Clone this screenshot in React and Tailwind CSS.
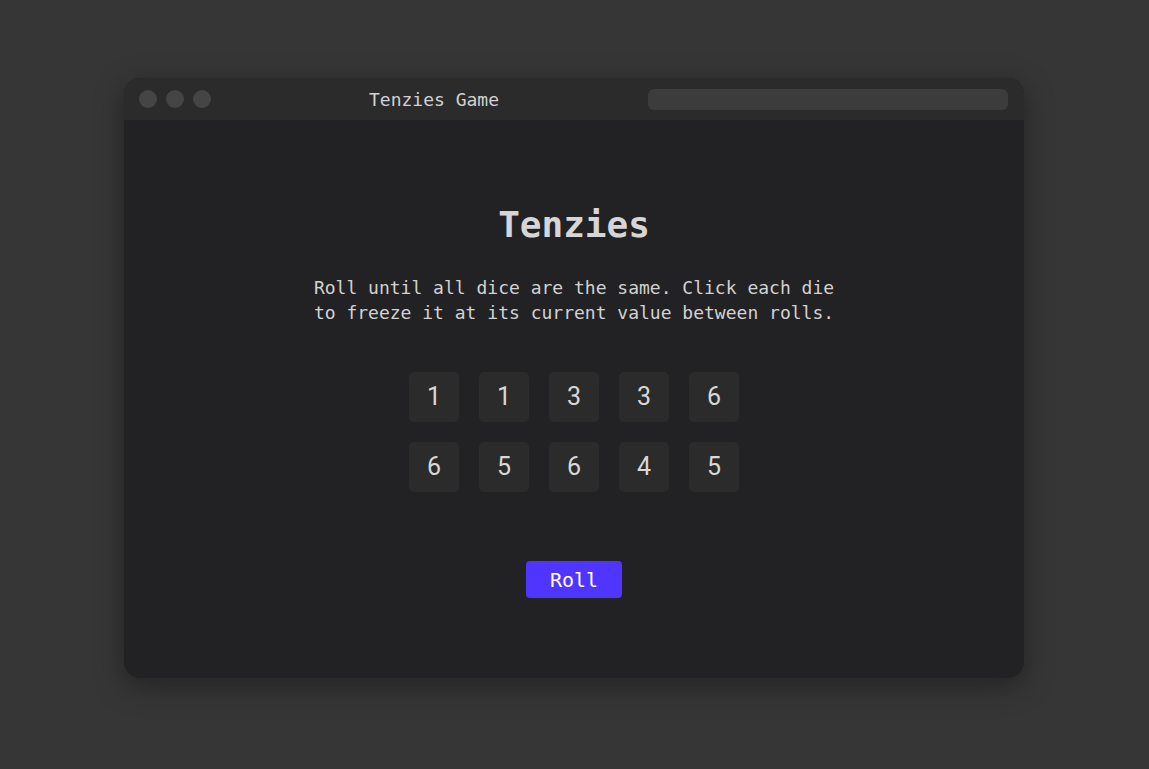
const dice = [1, 1, 3, 3, 6, 6, 5, 6, 4, 5]

export default function App() {
  return (
    <div className="min-h-screen bg-[#363636] flex pl-[124px] pt-[78px] font-['DejaVu_Sans_Mono',monospace]">
      <div className="w-[900px] h-[600px] rounded-2xl overflow-hidden bg-[#222224] shadow-[0_8px_30px_rgba(0,0,0,0.35)] flex flex-col">
        {/* title bar */}
        <div className="h-[42px] bg-[#2b2b2b] flex items-center pl-[15px] pr-[16px] shrink-0">
          <div className="flex gap-[9px]">
            <span className="w-[18px] h-[18px] rounded-full bg-[#454545]" />
            <span className="w-[18px] h-[18px] rounded-full bg-[#454545]" />
            <span className="w-[18px] h-[18px] rounded-full bg-[#454545]" />
          </div>
          <div className="ml-[158px] mt-[2px] text-[18px] text-[#d2d2d2] leading-none">Tenzies Game</div>
          <div className="ml-auto w-[360px] h-[21px] rounded-[6px] bg-[#3c3c3c]" />
        </div>

        <div className="flex-1 flex flex-col items-center pt-[85px]">
          <h1 className="text-[36px] leading-[40px] font-bold text-[#d6d6d6]">Tenzies</h1>
          <p className="mt-[30px] text-[18px] leading-[25px] text-[#d2d2d2] text-center w-[540px]">
            Roll until all dice are the same. Click each die to freeze it at its current value between rolls.
          </p>
          <div className="mt-[47px] grid grid-cols-5 gap-[20px]">
            {dice.map((d, i) => (
              <button
                key={i}
                className="w-[50px] h-[50px] rounded-[5px] bg-[#2b2b2b] flex items-center justify-center text-[25px] text-[#d8d8d8] font-['Roboto',sans-serif]"
              >
                {d}
              </button>
            ))}
          </div>
          <button className="mt-[69px] w-[96px] h-[37px] rounded-[4px] bg-[#5035ff] text-white text-[20px] font-['DejaVu_Sans_Mono',monospace]">
            Roll
          </button>
        </div>
      </div>
    </div>
  )
}
